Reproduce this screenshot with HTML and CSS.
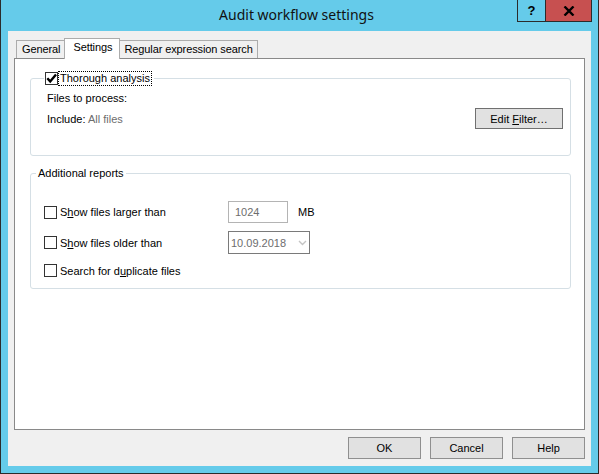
FILE: index.html
```html
<!DOCTYPE html>
<html lang="en">
<head>
    <meta charset="UTF-8">
    <title>Audit workflow settings</title>
    <link rel="stylesheet" href="styles.css">
</head>
<body>

    <div class="window">
        <div class="titlebar">
            <span></span>
            <span class="title">Audit workflow settings</span>
            <div class="caption-buttons">
                <span class="cap-btn help">?</span>
                <span class="cap-btn close">
                    <svg width="12" height="10" viewBox="0 0 12 10">
                        <path d="M1.5 0.5 L10.5 9.5 M10.5 0.5 L1.5 9.5" stroke="#000" stroke-width="2.4" fill="none"/>
                    </svg>
                </span>
            </div>
        </div>

        <div class="client">
            <div class="tabs">
                <div class="tab first">General</div>
                <div class="tab active">Settings</div>
                <div class="tab">Regular expression search</div>
            </div>

            <div class="panel">
                <fieldset class="group">
                    <legend class="legend-check">
                        <span class="checkbox checked">
                            <svg width="11" height="11" viewBox="0 0 11 11">
                                <path d="M1.3 5.3 L4.2 8.4 L10 1.4" stroke="#000" stroke-width="2.4" fill="none"/>
                            </svg>
                        </span>
                        <span class="focus-text"><u>T</u>horough analysis</span>
                    </legend>
                    <div class="group-body filter-body">
                        <div class="line">Files to process:</div>
                        <div class="filter-row">
                            <span>Include: <span class="muted">All files</span></span>
                            <button class="btn filter-btn">Edit <u>F</u>ilter…</button>
                        </div>
                    </div>
                </fieldset>

                <fieldset class="group reports">
                    <legend class="legend-text">Additional reports</legend>
                    <div class="group-body report-body">
                        <div class="report-row">
                            <label class="check-label"><span class="checkbox"></span><span>S<u>h</u>ow files larger than</span></label>
                            <span class="textbox">1024</span>
                            <span class="unit">MB</span>
                        </div>
                        <div class="report-row">
                            <label class="check-label"><span class="checkbox"></span><span>S<u>h</u>ow files older than</span></label>
                            <span class="combo">
                                10.09.2018
                                <svg width="9" height="6" viewBox="0 0 9 6">
                                    <path d="M1 1 L4.5 4.5 L8 1" stroke="#c4c4c4" stroke-width="1.4" fill="none"/>
                                </svg>
                            </span>
                        </div>
                        <div class="report-row last">
                            <label class="check-label"><span class="checkbox"></span><span>Search for d<u>u</u>plicate files</span></label>
                        </div>
                    </div>
                </fieldset>
            </div>

            <div class="dialog-buttons">
                <button class="btn">OK</button>
                <button class="btn">Cancel</button>
                <button class="btn">Help</button>
            </div>
        </div>
    </div>

</body>
</html>
```

FILE: styles.css
```css
body {
    margin: 0;
    font-family: "Liberation Sans", Arial, sans-serif;
    font-size: 11px;
    color: #000;
}
.window {
    width: 597px;
    height: 473px;
    background-color: #65cbea;
    border: 1px solid #2b2b2b;
    border-top: none;
    display: flex;
    flex-direction: column;
}
.titlebar {
    height: 31px;
    display: grid;
    grid-template-columns: 1fr auto 1fr;
    align-items: start;
    padding-right: 6px;
}
.title {
    font-family: "Noto Sans", sans-serif;
    font-size: 14px;
    line-height: 31px;
    color: #111;
    margin-top: -1px;
}
.caption-buttons {
    justify-self: end;
    display: flex;
}
.cap-btn {
    height: 21px;
    border: 1px solid #2b2b2b;
    border-top: none;
    display: flex;
    align-items: center;
    justify-content: center;
    font-weight: bold;
    font-size: 13px;
}
.help {
    width: 27px;
    border-right: none;
}
.close {
    width: 45px;
    background-color: #c75050;
}
.client {
    flex: 1;
    margin: 0 7px 7px 7px;
    background-color: #f0f0f0;
    padding: 7px 6px;
    display: flex;
    flex-direction: column;
}
.tabs {
    display: flex;
    align-items: flex-end;
    height: 20px;
    padding-left: 2px;
}
.tab {
    height: 17px;
    line-height: 17px;
    padding: 0 4px;
    border: 1px solid #acacac;
    border-bottom: none;
    background-color: #f0f0f0;
    letter-spacing: -0.1px;
}
.tab.first {
    padding: 0 5px;
}
.tab + .tab {
    border-left: none;
}
.tab.active {
    height: 20px;
    line-height: 17px;
    background-color: #fff;
    border-left: 1px solid #acacac;
    margin: 0 -1px -1px -2px;
    padding: 0 7px 0 8px;
    position: relative;
    z-index: 1;
}
.tab.active + .tab {
    border-left: 1px solid #acacac;
}
.panel {
    flex: 1;
    background-color: #fff;
    border: 1px solid #898989;
    padding: 0 13px 0 15px;
}
.group {
    margin: 12px 0 0 0;
    padding: 0;
    border: 1px solid #d5dfe5;
    border-radius: 3px;
}
.group-body {
    padding: 0 7px 26px 16px;
}
.legend-check {
    margin-left: 13px;
    padding: 0 3px 0 1px;
    display: flex;
    align-items: center;
    height: 15px;
}
.focus-text {
    margin-left: 1px;
    padding: 0 1px;
    line-height: 13px;
    outline: 1px dotted #000;
}
.focus-text u {
    text-decoration: none;
}
.checkbox {
    width: 11px;
    height: 11px;
    border: 1px solid #333;
    background-color: #fff;
    display: inline-flex;
    align-items: center;
    justify-content: center;
    flex-shrink: 0;
}
.line {
    margin-top: 6px;
    line-height: 13px;
}
.filter-row {
    margin-top: 3px;
    display: flex;
    align-items: center;
    justify-content: space-between;
}
.muted {
    color: #6d6d6d;
}
.btn {
    font-family: inherit;
    font-size: 11px;
    color: #000;
    background-color: #e1e1e1;
    border: 1px solid #8f8f8f;
    padding: 0;
    margin: 0;
    height: 22px;
}
.filter-btn {
    width: 88px;
    height: 21px;
    border-color: #707070;
}
.reports {
    margin-top: 11px;
}
.legend-text {
    margin-left: 5px;
    padding: 0 2px;
    line-height: 13px;
}
.report-body {
    padding: 21px 7px 11px 13px;
}
.report-row {
    display: flex;
    align-items: center;
    margin-bottom: 8px;
}
.report-row.last {
    margin-top: 10px;
    margin-bottom: 0;
}
.check-label {
    width: 184px;
    display: flex;
    align-items: center;
    gap: 3px;
}
.textbox {
    width: 52px;
    height: 20px;
    line-height: 20px;
    border: 1px solid #b4b4b4;
    padding-left: 6px;
    color: #6d6d6d;
}
.unit {
    margin-left: 10px;
}
.combo {
    width: 76px;
    height: 21px;
    border: 1px solid #7a7a7a;
    padding: 0 2px;
    display: flex;
    align-items: center;
    justify-content: space-between;
    color: #6d6d6d;
}
.dialog-buttons {
    display: flex;
    justify-content: flex-end;
    gap: 9px;
    margin-top: 7px;
}
.dialog-buttons .btn {
    width: 73px;
}
```
